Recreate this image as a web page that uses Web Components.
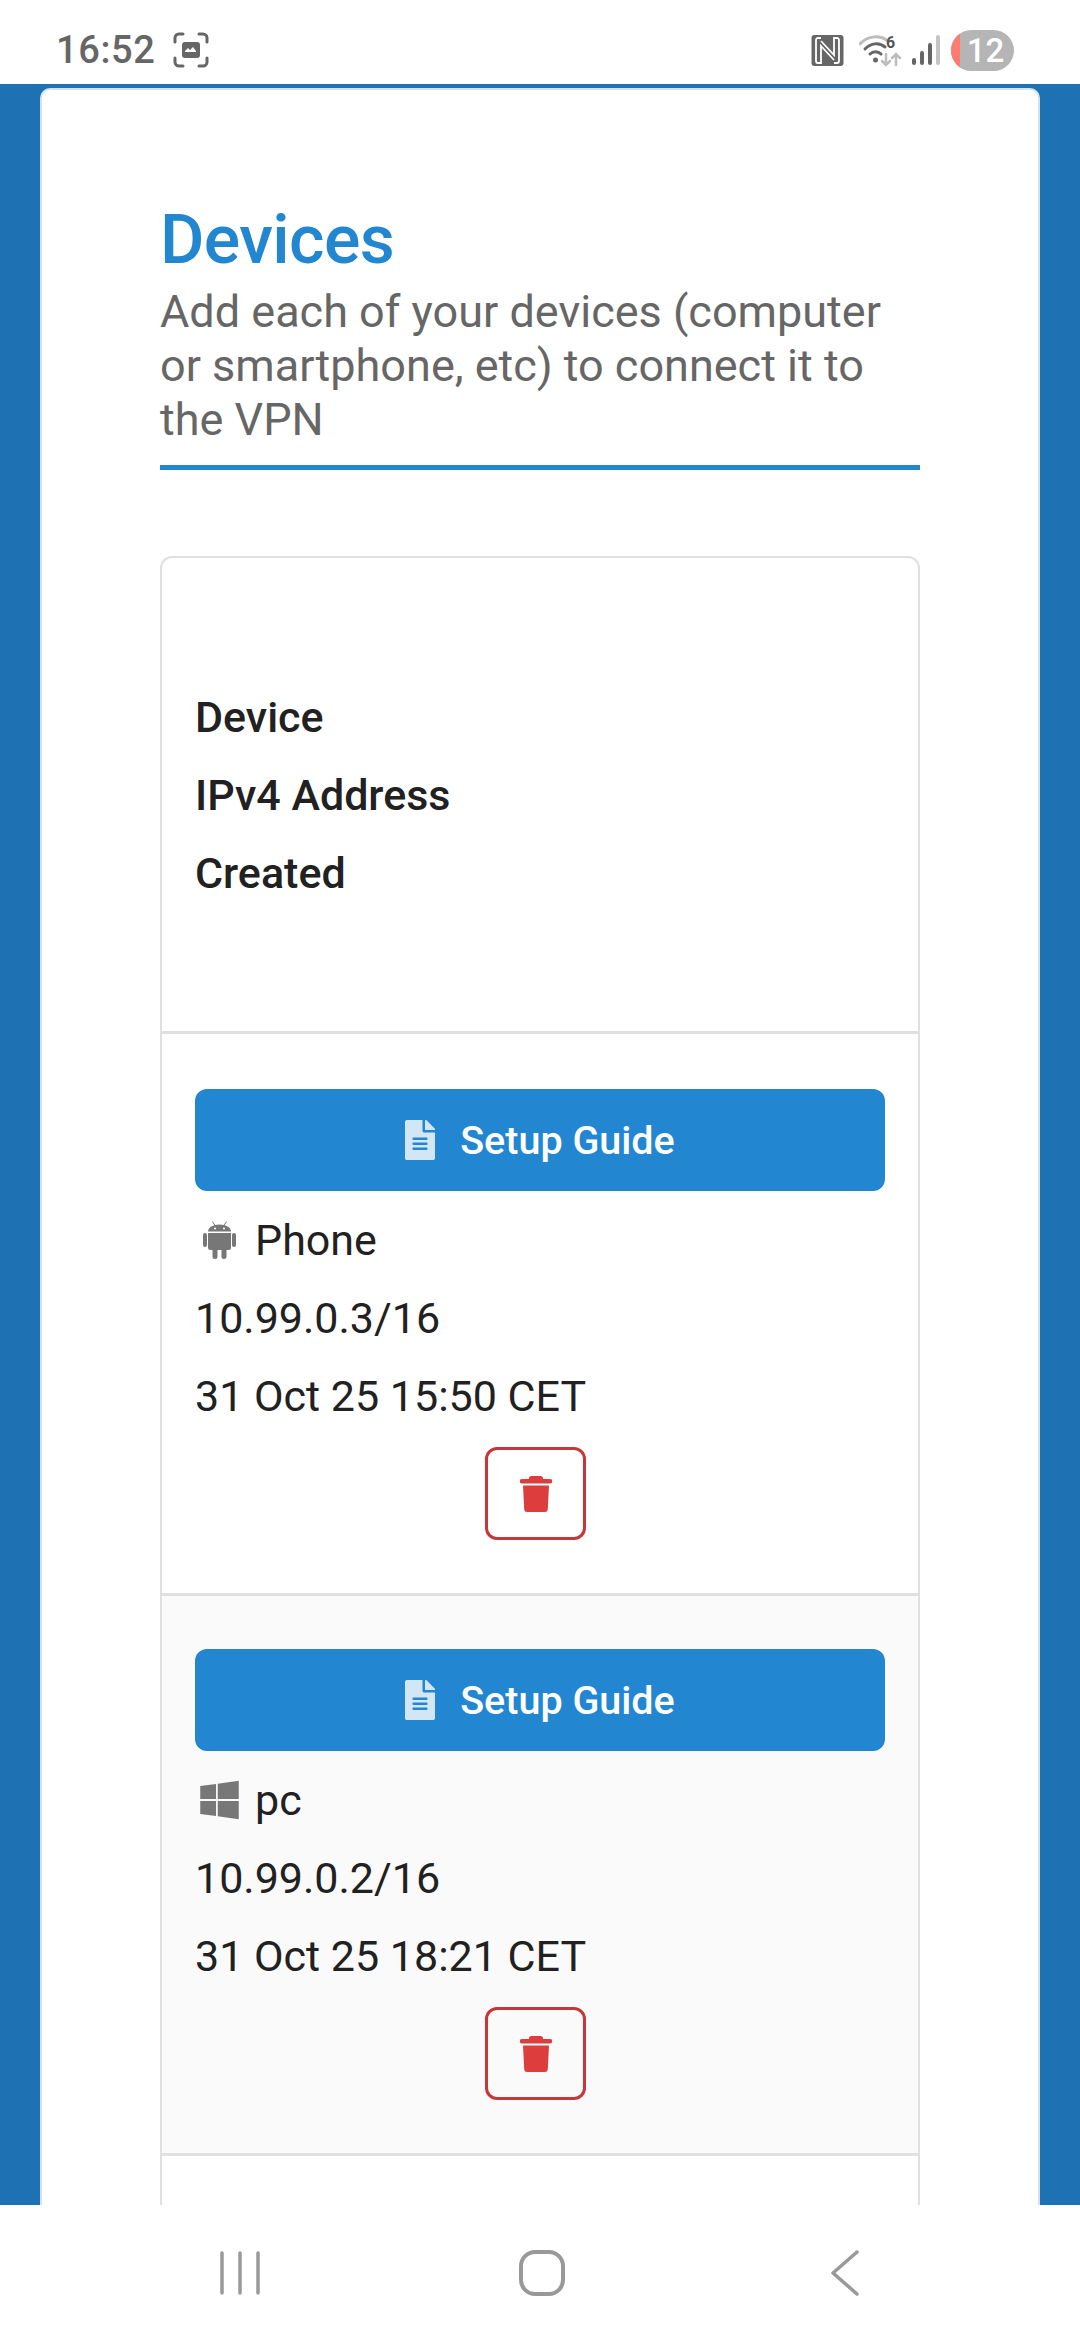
<!DOCTYPE html>
<html>
<head>
<meta charset="utf-8">
<title>Devices</title>
<style>
    html, body { margin: 0; padding: 0; }
    body {
        width: 1080px;
        height: 2340px;
        overflow: hidden;
        display: flex;
        flex-direction: column;
        font-family: Roboto, "Liberation Sans", sans-serif;
        background: #fff;
    }
</style>
</head>
<body>
<status-bar time="16:52" battery="12"></status-bar>
<page-main>
    <page-title text="Add each of your devices (computer or smartphone, etc) to connect it to the VPN">Devices</page-title>
    <device-table>
        <table-head>
            <span>Device</span>
            <span>IPv4 Address</span>
            <span>Created</span>
        </table-head>
        <device-row os="android" ip="10.99.0.3/16" created="31 Oct 25 15:50 CET">Phone</device-row>
        <device-row os="windows" ip="10.99.0.2/16" created="31 Oct 25 18:21 CET" striped>pc</device-row>
        <table-rest></table-rest>
    </device-table>
</page-main>
<nav-bar></nav-bar>

<script>
// font awesome style glyphs, drawn inline
const ICONS = {
    file: '<svg viewBox="0 0 384 512" width="30" height="40"><path fill="currentColor" d="M224 136V0H24C10.7 0 0 10.7 0 24v464c0 13.3 10.7 24 24 24h336c13.3 0 24-10.7 24-24V160H248c-13.2 0-24-10.8-24-24zm64 236c0 6.6-5.4 12-12 12H108c-6.6 0-12-5.4-12-12v-8c0-6.6 5.4-12 12-12h168c6.6 0 12 5.4 12 12v8zm0-64c0 6.6-5.4 12-12 12H108c-6.6 0-12-5.4-12-12v-8c0-6.6 5.4-12 12-12h168c6.6 0 12 5.4 12 12v8zm0-72v8c0 6.6-5.4 12-12 12H108c-6.6 0-12-5.4-12-12v-8c0-6.6 5.4-12 12-12h168c6.6 0 12 5.4 12 12zm96-114.1v6.1H256V0h6.1c6.4 0 12.5 2.5 17 7l97.9 98c4.5 4.5 7 10.6 7 16.9z"/></svg>',
    trash: '<svg viewBox="0 0 32 36" width="32" height="36"><path fill="currentColor" d="M11 0h10a2.500 2.500 0 0 1 2 3h7a2.200 2.200 0 0 1 0 4.500H2A2.200 2.200 0 0 1 2 3h7a2.500 2.500 0 0 1 2-3zM3 9.500h26l-1.200 23.500a3 3 0 0 1-3 3H7.200a3 3 0 0 1-3-3z"/></svg>',
    windows: '<svg viewBox="0 0 448 512" width="39" height="44"><path fill="currentColor" d="M0 93.7l183.6-25.3v177.4H0V93.7zm0 324.6l183.6 25.3V268.4H0v149.9zm203.8 28L448 480V268.4H203.8v177.9zm0-380.6v180.1H448V32L203.8 65.7z"/></svg>',
    android: '<svg viewBox="0 0 33 38" width="33" height="38"><g fill="currentColor"><path d="M5 10.600C5 6.500 10 3.400 16.500 3.400S28 6.500 28 10.600z"/><path d="M5 12h23v14.500a2.500 2.500 0 0 1-2.500 2.500h-18A2.500 2.500 0 0 1 5 26.500z"/><rect x="0" y="12" width="4" height="14" rx="2"/><rect x="29" y="12" width="4" height="14" rx="2"/><rect x="9.500" y="25" width="5" height="13" rx="2.500"/><rect x="18.500" y="25" width="5" height="13" rx="2.500"/></g><path d="M9.500 0.500l2.500 4M23.500 0.500l-2.500 4" stroke="currentColor" stroke-width="1" fill="none"/><circle cx="12" cy="7.500" r="1" fill="#fff"/><circle cx="21" cy="7.500" r="1" fill="#fff"/></svg>'
};

class StatusBar extends HTMLElement {
    connectedCallback() {
        this.attachShadow({ mode: 'open' });
        this.shadowRoot.innerHTML = `
            <style>
                :host {
                    display: flex;
                    flex: none;
                    align-items: center;
                    justify-content: space-between;
                    height: 84px;
                    padding: 16px 66px 0 56px;
                    box-sizing: border-box;
                    background: #fff;
                    color: #666;
                }
                .side { display: flex; align-items: center; }
                .time { font-size: 38px; font-weight: 500; letter-spacing: 0.6px; margin-right: 18px; }
                svg { display: block; }
                .badge {
                    position: relative;
                    overflow: hidden;
                    width: 63px;
                    height: 41px;
                    margin-left: 11px;
                    border-radius: 21px;
                    background: #b5b5b5;
                    color: #fff;
                    font-size: 33px;
                    font-weight: 500;
                    line-height: 41px;
                    text-align: center;
                    text-indent: 6px;
                }
                .badge::before {
                    content: "";
                    position: absolute;
                    left: 0;
                    top: 0;
                    bottom: 0;
                    width: 9px;
                    background: #ff7b6f;
                }
            </style>
            <div class="side">
                <span class="time">${this.getAttribute('time')}</span>
                <svg width="36" height="36" viewBox="0 0 36 36" fill="none">
                    <path d="M2 10V6a4 4 0 0 1 4-4h4M26 2h4a4 4 0 0 1 4 4v4M34 26v4a4 4 0 0 1-4 4h-4M10 34H6a4 4 0 0 1-4-4v-4" stroke="#666" stroke-width="3" stroke-linecap="round"/>
                    <rect x="9" y="10" width="18" height="16" rx="3" fill="#666"/>
                    <path d="M12 19l3-3 2 2 3-3 3 4v1H12z" fill="#fff"/>
                </svg>
            </div>
            <div class="side">
                <svg width="33" height="33" viewBox="0 0 33 33" fill="none">
                    <rect x="0.500" y="1" width="32" height="31" rx="3" fill="#666"/>
                    <path d="M10 4H7a2 2 0 0 0-2 2v21a2 2 0 0 0 2 2h3V12l13 14" stroke="#fff" stroke-width="1.800"/>
                    <path d="M23 29h3a2 2 0 0 0 2-2V6a2 2 0 0 0-2-2h-3v17L10 7" stroke="#fff" stroke-width="1.800"/>
                </svg>
                <svg width="46" height="34" viewBox="0 0 46 34" fill="none" style="margin-left:15px">
                    <path d="M1 11C9 2 21 2 29 8" stroke="#bdbdbd" stroke-width="3" stroke-linecap="round"/>
                    <path d="M6 16C12 10 20 9 26 14" stroke="#666" stroke-width="3" stroke-linecap="round"/>
                    <path d="M11 21c3-3 8-3 11 0" stroke="#666" stroke-width="3" stroke-linecap="round"/>
                    <circle cx="16.500" cy="27" r="2.500" fill="#666"/>
                    <path d="M27 21v11M23 28l4 4 4-4M37 32V21M33 25l4-4 4 4" stroke="#bdbdbd" stroke-width="2.500" stroke-linecap="round"/>
                    <text x="27" y="15" font-family="Roboto, sans-serif" font-size="16" font-weight="700" fill="#555">6</text>
                </svg>
                <svg width="28" height="30" viewBox="0 0 28 30" style="margin-left:7px">
                    <rect x="0" y="23" width="4" height="7" rx="2" fill="#666"/>
                    <rect x="8" y="16" width="4" height="14" rx="2" fill="#666"/>
                    <rect x="16" y="8" width="4" height="22" rx="2" fill="#666"/>
                    <rect x="24" y="0" width="4" height="30" rx="2" fill="#c4c4c4"/>
                </svg>
                <div class="badge">${this.getAttribute('battery')}</div>
            </div>
        `;
    }
}

class PageMain extends HTMLElement {
    connectedCallback() {
        this.attachShadow({ mode: 'open' });
        this.shadowRoot.innerHTML = `
            <style>
                :host {
                    display: block;
                    flex: 1;
                    min-height: 0;
                    overflow: hidden;
                    padding: 4px 40px 0;
                    background: #1e72b4;
                }
                .card {
                    padding: 105px 118px 0;
                    background: #fff;
                    border: 2px solid #d7e1eb;
                    border-bottom: 0;
                    border-radius: 10px 10px 0 0;
                }
            </style>
            <div class="card"><slot></slot></div>
        `;
    }
}

class PageTitle extends HTMLElement {
    connectedCallback() {
        this.attachShadow({ mode: 'open' });
        this.shadowRoot.innerHTML = `
            <style>
                :host {
                    display: block;
                    padding-bottom: 18px;
                    border-bottom: 5px solid #2286d0;
                }
                h1 {
                    margin: 0;
                    font-size: 68px;
                    font-weight: 500;
                    line-height: 90px;
                    letter-spacing: -0.6px;
                    color: #2286d0;
                }
                p {
                    margin: 0;
                    font-size: 45px;
                    line-height: 54px;
                    color: #666;
                }
            </style>
            <h1><slot></slot></h1>
            <p>${this.getAttribute('text')}</p>
        `;
    }
}

class DeviceTable extends HTMLElement {
    connectedCallback() {
        this.attachShadow({ mode: 'open' });
        this.shadowRoot.innerHTML = `
            <style>
                :host {
                    display: block;
                    margin-top: 86px;
                    border: 2px solid #e0e0e0;
                    border-bottom: 0;
                    border-radius: 12px 12px 0 0;
                    overflow: hidden;
                    color: #212121;
                    font-size: 43px;
                }
            </style>
            <slot></slot>
        `;
    }
}

class TableHead extends HTMLElement {
    connectedCallback() {
        this.attachShadow({ mode: 'open' });
        this.shadowRoot.innerHTML = `
            <style>
                :host {
                    display: flex;
                    flex-direction: column;
                    margin-bottom: 2px;
                    padding: 120px 33px 119px;
                    border-bottom: 3px solid #e0e0e0;
                    font-weight: 500;
                }
                ::slotted(span) { line-height: 78px; }
            </style>
            <slot></slot>
        `;
    }
}

class DeviceRow extends HTMLElement {
    connectedCallback() {
        const os = this.getAttribute('os');
        this.attachShadow({ mode: 'open' });
        this.shadowRoot.innerHTML = `
            <style>
                :host {
                    display: flex;
                    flex-direction: column;
                    padding: 53px 33px;
                    border-bottom: 3px solid #e0e0e0;
                    background: #fff;
                }
                :host([striped]) { background: #fafafa; }
                .line { display: flex; align-items: center; height: 78px; }
                .os { display: flex; width: 60px; padding-left: 8px; box-sizing: border-box; color: #777; }
                :host([os="windows"]) .os { padding-left: 5px; }
                svg { display: block; }
            </style>
            <setup-button>Setup Guide</setup-button>
            <div class="line"><span class="os">${ICONS[os]}</span><slot></slot></div>
            <div class="line">${this.getAttribute('ip')}</div>
            <div class="line">${this.getAttribute('created')}</div>
            <delete-button></delete-button>
        `;
    }
}

class SetupButton extends HTMLElement {
    connectedCallback() {
        this.attachShadow({ mode: 'open' });
        this.shadowRoot.innerHTML = `
            <style>
                :host {
                    display: flex;
                    align-items: center;
                    justify-content: center;
                    gap: 25px;
                    height: 102px;
                    margin-bottom: 10px;
                    border-radius: 12px;
                    background: #2286d0;
                    color: #fff;
                    font-size: 39.500px;
                    font-weight: 500;
                }
                span { display: flex; color: #d3e6f6; }
            </style>
            <span>${ICONS.file}</span><slot></slot>
        `;
    }
}

class DeleteButton extends HTMLElement {
    connectedCallback() {
        this.attachShadow({ mode: 'open' });
        this.shadowRoot.innerHTML = `
            <style>
                :host {
                    display: flex;
                    align-items: center;
                    justify-content: center;
                    align-self: flex-start;
                    box-sizing: border-box;
                    width: 101px;
                    height: 93px;
                    margin: 12px 0 0 290px;
                    border: 3px solid #c8363a;
                    border-radius: 12px;
                    color: #dd3d3d;
                }
            </style>
            ${ICONS.trash}
        `;
    }
}

class TableRest extends HTMLElement {
    connectedCallback() {
        this.attachShadow({ mode: 'open' });
        this.shadowRoot.innerHTML = `
            <style>
                :host { display: block; height: 300px; background: #fff; }
            </style>
        `;
    }
}

class NavBar extends HTMLElement {
    connectedCallback() {
        this.attachShadow({ mode: 'open' });
        this.shadowRoot.innerHTML = `
            <style>
                :host {
                    display: grid;
                    grid-template-columns: 480px 120px 480px;
                    flex: none;
                    align-items: center;
                    justify-items: center;
                    height: 135px;
                    padding-top: 1px;
                    box-sizing: border-box;
                    background: #fff;
                }
                svg { display: block; }
                .menu { justify-self: start; margin-left: 220px; }
                .home { margin-left: 4px; }
                .back { justify-self: start; margin-left: 230px; }
            </style>
            <svg class="menu" width="40" height="44" viewBox="0 0 40 44" stroke="#999" stroke-width="3.500" stroke-linecap="round">
                <path d="M2 2v40M20 2v40M38 2v40"/>
            </svg>
            <svg class="home" width="46" height="46" viewBox="0 0 46 46" fill="none" stroke="#999" stroke-width="4">
                <rect x="2" y="2" width="42" height="42" rx="14"/>
            </svg>
            <svg class="back" width="30" height="46" viewBox="0 0 30 46" fill="none" stroke="#999" stroke-width="3.500" stroke-linecap="round" stroke-linejoin="round">
                <path d="M27 2L3 23l24 21"/>
            </svg>
        `;
    }
}

customElements.define('status-bar', StatusBar);
customElements.define('page-main', PageMain);
customElements.define('page-title', PageTitle);
customElements.define('device-table', DeviceTable);
customElements.define('table-head', TableHead);
customElements.define('device-row', DeviceRow);
customElements.define('setup-button', SetupButton);
customElements.define('delete-button', DeleteButton);
customElements.define('table-rest', TableRest);
customElements.define('nav-bar', NavBar);
</script>
</body>
</html>
